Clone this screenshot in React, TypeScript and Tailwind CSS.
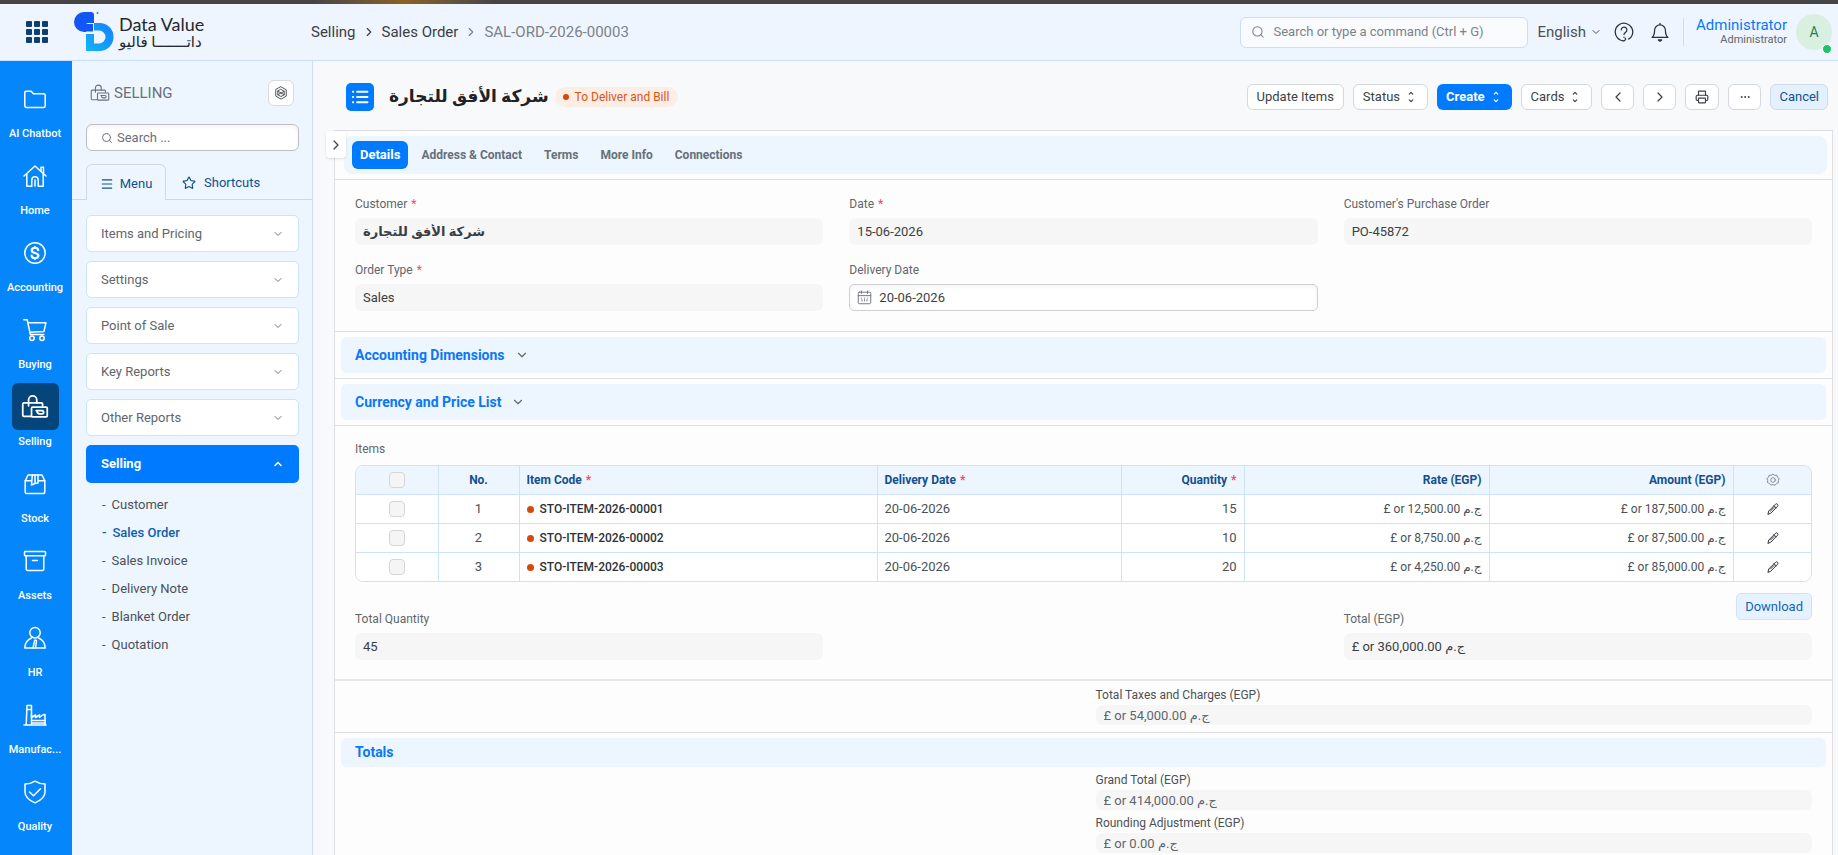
import React, { useId, useState } from 'react';
import {
    ChevronDown, ChevronLeft, ChevronRight, ChevronUp,
    Ellipsis, Menu, Printer, Search, Star,
} from 'lucide-react';

/* ---------- ICONS ---------- */

function Icon({ children, className = 'size-6', stroke = 1.5 }: { children: React.ReactNode; className?: string; stroke?: number }) {
    return (
        <svg
            viewBox="0 0 24 24"
            fill="none"
            stroke="currentColor"
            strokeWidth={stroke}
            strokeLinecap="round"
            strokeLinejoin="round"
            className={className}
            aria-hidden="true"
        >
            {children}
        </svg>
    );
}

const sellingShape = (
    <>
        <path d="M9 20H2.5a1 1 0 0 1-1-1V9.5a1 1 0 0 1 1-1h15a1 1 0 0 1 1 1V11" />
        <path d="M6.5 11V6a3.5 3.5 0 0 1 7 0v2.5" />
        <rect x="9" y="12" width="13.5" height="8.5" rx="1" />
        <path d="M13 15h5a1.4 1.4 0 0 1 0 2.8h-1.6a2.4 2.4 0 0 1-2.6-1.8" />
    </>
);

const folderShape = <path d="M1.8 19V5.6a1.4 1.4 0 0 1 1.4-1.4h5l2.2 2.6h10.4a1.4 1.4 0 0 1 1.4 1.4V19a1.4 1.4 0 0 1-1.4 1.4H3.2A1.4 1.4 0 0 1 1.8 19Z" />;

const homeShape = (
    <>
        <path d="M1 12 12 2l11 10" />
        <path d="M18 7.2V3.2h2.5v6.3" />
        <path d="M3.8 10v12.2h5V16a3.2 3.2 0 0 1 6.4 0v6.2h5V10" />
        <path d="M12 16v6" />
    </>
);

const accountingShape = (
    <>
        <circle cx="12" cy="12" r="10.2" />
        <path strokeWidth="2.2" d="M15.2 9.2c-.2-1.5-1.5-2.3-3.2-2.3-1.9 0-3.3.9-3.3 2.5 0 3.4 6.7 1.8 6.7 5.2 0 1.6-1.5 2.6-3.4 2.6-1.9 0-3.2-1-3.4-2.6M12 6v.5M12 17.5v.5" />
    </>
);

const buyingShape = (
    <>
        <path d="M.8 1.8h3.4l3.2 14.7h13.4" />
        <path d="M4.9 4.8h18l-1.9 8.6L7 14.3" />
        <circle cx="9" cy="20.3" r="2.2" />
        <circle cx="19" cy="20.3" r="2.2" />
    </>
);

const stockShape = (
    <>
        <path d="M2.2 8.8 5 3h14l2.8 5.8V20a1.6 1.6 0 0 1-1.6 1.6H3.8A1.6 1.6 0 0 1 2.2 20Z" />
        <path d="M2.2 8.8h6M15.5 8.8h6.3M9.3 3 8.5 13l3.5-1.5V3M15 3v8l-3 .5" />
    </>
);

const assetsShape = (
    <>
        <rect x="1.5" y="2.5" width="21" height="4.2" rx=".8" />
        <path d="M3.2 6.7V20a1.5 1.5 0 0 0 1.5 1.5h14.6a1.5 1.5 0 0 0 1.5-1.5V6.7M9.5 11.5h5" />
    </>
);

const hrShape = (
    <>
        <circle cx="12" cy="6.7" r="5.2" />
        <path d="M8.5 12C4.5 13.5 2 17 1.8 22H10M15.5 12c4 1.5 6.5 5 6.7 10H12.5" />
        <path d="M11.5 15 10 22h2.5l1-7M11.5 15c0-1.5 2-1.5 2 0" />
    </>
);

const factoryShape = (
    <>
        <path d="M1 22h22M3.2 22 4 2.5h4.5V22M4 6.5h4.5" />
        <path d="M8.5 11.5v3l4-2.5v2.5l4-2.5v2.5l3-2.5 2.5-.5V22" />
        <path d="M8.5 17.5H22M9 20h13" />
    </>
);

const qualityShape = (
    <>
        <path d="M12 1.2c3 2 6.5 2.8 10 2.9v8c0 5-4.5 8.5-10 10.8C6.5 20.6 2 17.1 2 12.1v-8c3.5-.1 7-.9 10-2.9Z" />
        <path d="m6.5 12 4 3.7 7-7" />
    </>
);

function Logo() {
    return (
        <svg viewBox="0 0 40 40" className="size-10" aria-hidden="true">
            <defs>
                <linearGradient id="logo-lower" x1="0" y1="1" x2="1" y2="0">
                    <stop offset="0" stopColor="#12b5fb" />
                    <stop offset="1" stopColor="#1580fa" />
                </linearGradient>
            </defs>
            <path d="M10 0h7a3 3 0 0 1 3 3v8h-6a2 2 0 0 0-2 2v7h-2A10 10 0 0 1 10 0Z" fill="#1257f5" />
            <path d="M20 11h5.5a14 14 0 0 1 0 28H12V22h8v9.5h5a6.5 6.5 0 0 0 0-13h-5Z" fill="url(#logo-lower)" />
            <path d="M12 12h7v7.500h-7Z" fill="#1257f5" />
            <circle cx="23.5" cy="1" r="1" fill="#1580fa" />
        </svg>
    );
}

function HexGear({ className }: { className: string }) {
    return (
        <Icon className={className}>
            <path d="M12 1.5 21 6.5v11l-9 5-9-5v-11Z" />
            <path d="m12 6 5.5 3v6L12 18l-5.5-3V9ZM6.5 9l11 6M17.5 9l-11 6" />
        </Icon>
    );
}

function UpDown() {
    return (
        <Icon className="size-[14px]" stroke={2}>
            <path d="m9 7 3-3 3 3M9 17l3 3 3-3" />
        </Icon>
    );
}

/* ---------- DATA ---------- */

const modules = [
    { label: 'AI Chatbot', shape: folderShape },
    { label: 'Home', shape: homeShape },
    { label: 'Accounting', shape: accountingShape },
    { label: 'Buying', shape: buyingShape },
    { label: 'Selling', shape: sellingShape },
    { label: 'Stock', shape: stockShape },
    { label: 'Assets', shape: assetsShape },
    { label: 'HR', shape: hrShape },
    { label: 'Manufac...', shape: factoryShape },
    { label: 'Quality', shape: qualityShape },
];

const menuGroups = ['Items and Pricing', 'Settings', 'Point of Sale', 'Key Reports', 'Other Reports'];
const sellingLinks = ['Customer', 'Sales Order', 'Sales Invoice', 'Delivery Note', 'Blanket Order', 'Quotation'];
const formTabs = ['Details', 'Address & Contact', 'Terms', 'More Info', 'Connections'];

const items = [
    { code: 'STO-ITEM-2026-00001', date: '20-06-2026', qty: 15, rate: '12,500.00', amount: '187,500.00' },
    { code: 'STO-ITEM-2026-00002', date: '20-06-2026', qty: 10, rate: '8,750.00', amount: '87,500.00' },
    { code: 'STO-ITEM-2026-00003', date: '20-06-2026', qty: 20, rate: '4,250.00', amount: '85,000.00' },
];

const customer = 'شركة الأفق للتجارة';
const egp = (value: string) => `£ or ${value} ج.م`;

/* ---------- SMALL PARTS ---------- */

function Required() {
    return <span className="ml-1 text-[#f8485e]">*</span>;
}

interface FieldProps {
    label: string;
    value: string;
    required?: boolean;
    bold?: boolean;
    compact?: boolean;
}

function Field({ label, value, required, bold, compact }: FieldProps) {
    const id = useId();
    return (
        <div className="flex flex-col">
            <label htmlFor={id} className={compact ? 'text-[12px] leading-5 text-[#4b5158]' : 'mb-1 text-[12px] leading-5 text-[#5f666d]'}>
                {label}
                {required && <Required />}
            </label>
            <input
                id={id}
                readOnly
                defaultValue={value}
                className={`w-full rounded-md bg-[#f6f6f6] px-2 text-[13px] outline-none ${compact ? 'mb-[3px] h-5 text-[#5f666d]' : 'h-[27px] text-[#3a3f45]'} ${bold ? 'font-bold text-[#1f2226]' : ''}`}
            />
        </div>
    );
}

function ToolButton({ children, label }: { children: React.ReactNode; label?: string }) {
    return (
        <button
            type="button"
            aria-label={label}
            className="flex h-[26px] min-w-[33px] items-center justify-center gap-1 rounded-md border border-[#d5d8dc] bg-white px-[9px] text-[13px] text-[#3a3f45]"
        >
            {children}
        </button>
    );
}

function FoldedSection({ title }: { title: string }) {
    return (
        <section className="border-b border-[#dcdee1] px-[6px] py-[5px]">
            <button type="button" className="flex h-9 w-full items-center gap-[10px] rounded-md bg-[#edf5ff] px-[14px] text-[14px] font-bold text-[#0a78f5]">
                {title}
                <ChevronDown className="size-[14px] text-[#5f666d]" strokeWidth={2} />
            </button>
        </section>
    );
}

/* ---------- PAGE PARTS ---------- */

function Header() {
    return (
        <header className="flex h-[57px] shrink-0 items-center border-b border-[#c5dffd] bg-[#eef5ff]">
            <div className="flex w-[311px] shrink-0 items-center">
                <button type="button" aria-label="Apps" className="ml-[26px] grid grid-cols-3 gap-[2px]">
                    {Array.from({ length: 9 }, (_, i) => (
                        <span key={i} className="size-[6px] rounded-[1px] bg-[#0d3f73]" />
                    ))}
                </button>
                <div className="ml-[26px] flex items-center gap-[5px]">
                    <Logo />
                    <div className="flex flex-col text-[#24282d]">
                        <span className="font-['Lato',sans-serif] text-[18px] leading-5">Data Value</span>
                        <span className="text-[15px] leading-4">داتـــــــا فاليو</span>
                    </div>
                </div>
            </div>

            <nav aria-label="Breadcrumb" className="flex items-center gap-[6px] text-[15px] text-[#3a3f45]">
                <a href="#selling">Selling</a>
                <ChevronRight className="size-[14px]" />
                <a href="#sales-order">Sales Order</a>
                <ChevronRight className="size-[14px] text-[#7c8289]" />
                <span className="text-[#7c8289]">SAL-ORD-2026-00003</span>
            </nav>

            <div className="ml-auto flex items-center pr-[6px]">
                <label className="flex h-[31px] w-[288px] items-center gap-2 rounded-md border border-[#c5dffd] bg-[#f9fbfe] px-[10px] text-[#7c8289]">
                    <Search className="size-[14px] shrink-0" strokeWidth={1.8} />
                    <input
                        type="search"
                        aria-label="Search or type a command"
                        placeholder="Search or type a command (Ctrl + G)"
                        className="w-full bg-transparent text-[13px] outline-none placeholder:text-[#7c8289]"
                    />
                </label>
                <button type="button" className="ml-[9px] flex items-center gap-1 text-[15px] text-[#4b5158]">
                    English
                    <ChevronDown className="size-3" />
                </button>
                <button type="button" aria-label="Help" className="ml-3 text-[#2d3238]">
                    <Icon className="size-5">
                        <path d="M12 22.5a10.500 10.500 0 1 1 9.800-6.800c-.8 2.300-2.300 3.800-4.300 4.800" />
                        <path d="M8.7 9.5a3.400 3.400 0 1 1 5.300 2.800c-1.300.9-2 1.400-2 2.700M12 18v.3M12 22.500c2-1 2.500-2 1.500-3" />
                    </Icon>
                </button>
                <button type="button" aria-label="Notifications" className="ml-4 text-[#2d3238]">
                    <Icon className="size-5">
                        <path d="M2.5 18.5h19c-2.500-2-3-4-3-8.500a6.500 6.500 0 0 0-13 0c0 4.500-.5 6.500-3 8.500ZM12 3.500V1.500" />
                        <path d="M10 21.5h4l-2 1.5Z" fill="currentColor" />
                    </Icon>
                </button>
                <div className="ml-[13px] h-7 w-px bg-[#d8dde3]" />
                <div className="ml-3 flex flex-col items-end">
                    <span className="text-[15px] leading-4 text-[#0a78f5]">Administrator</span>
                    <span className="text-[11px] leading-[14px] text-[#5f666d]">Administrator</span>
                </div>
                <div className="relative ml-[9px] flex size-9 items-center justify-center rounded-full bg-[#d9f0e1] text-[14px] text-[#2f7a55]">
                    A
                    <span className="absolute right-0 -bottom-1 size-[10px] rounded-full border border-white bg-[#1fc16b]" />
                </div>
            </div>
        </header>
    );
}

function ModuleRail() {
    return (
        <nav aria-label="Modules" className="flex w-[72px] shrink-0 flex-col gap-[10px] overflow-hidden bg-[#0686fb] pt-[14px] pr-[2px]">
            {modules.map((m) => (
                <a key={m.label} href="#module" className="flex flex-col items-center gap-1 text-white">
                    <span className={`flex size-[47px] items-center justify-center rounded-md ${m.label === 'Selling' ? 'bg-[#06457c]' : ''}`}>
                        <Icon className={m.label === 'Selling' ? 'size-7' : 'size-6'}>{m.shape}</Icon>
                    </span>
                    <span className="text-[11px] leading-4 font-medium">{m.label}</span>
                </a>
            ))}
        </nav>
    );
}

function Sidebar() {
    return (
        <aside className="flex w-[241px] shrink-0 flex-col border-r border-[#c5dffd] bg-[#edf5ff]">
            <div className="mt-[19px] flex items-center justify-between px-[18px]">
                <h2 className="flex items-center gap-1 text-[15px] text-[#6b7178]">
                    <Icon className="size-5" stroke={1.3}>{sellingShape}</Icon>
                    SELLING
                </h2>
                <button type="button" aria-label="Menu settings" className="flex size-[26px] items-center justify-center rounded-md border border-[#d9dbde] bg-white text-[#3a3f45]">
                    <HexGear className="size-[14px]" />
                </button>
            </div>

            <label className="mr-[13px] ml-[14px] mt-[18px] flex h-[27px] items-center gap-1 rounded-md border border-[#bcbfc3] bg-white px-[14px] text-[#6b7178] shadow-inner">
                <Search className="size-3 shrink-0" />
                <input type="search" aria-label="Search menu" placeholder="Search ..." className="w-full bg-transparent text-[13px] outline-none placeholder:text-[#6b7178]" />
            </label>

            <div className="mt-[13px] flex h-9 text-[13px] text-[#12508f]">
                <div className="w-[14px] border-b border-[#d3d8de]" />
                <button type="button" className="flex w-20 items-center justify-center gap-[6px] rounded-t-md border border-b-0 border-[#d3d8de] pt-[2px]">
                    <Menu className="size-[14px]" />
                    Menu
                </button>
                <button type="button" className="flex flex-1 items-center gap-2 border-b border-[#d3d8de] pt-[2px] pl-4">
                    <Star className="size-[14px]" />
                    Shortcuts
                </button>
            </div>

            <div className="mt-[15px] mr-[13px] ml-[14px] flex flex-col gap-[9px]">
                {menuGroups.map((g) => (
                    <button key={g} type="button" className="flex h-[37px] items-center justify-between rounded-[5px] border border-[#cde3fd] bg-white px-[14px] text-[13px] text-[#5f666d]">
                        {g}
                        <ChevronDown className="size-3" strokeWidth={1.8} />
                    </button>
                ))}
                <button type="button" aria-expanded="true" className="flex h-[38px] items-center justify-between rounded-[5px] bg-[#007bff] px-[15px] text-[13px] font-bold text-white">
                    Selling
                    <ChevronUp className="size-3" strokeWidth={3} />
                </button>
            </div>
            <ul className="mt-2 ml-[30px] text-[13px] leading-7 text-[#4b5158]">
                {sellingLinks.map((l) => (
                    <li key={l} className={l === 'Sales Order' ? 'font-medium text-[#0f5fb0]' : ''}>
                        <a href="#link" className="flex gap-[6px]">
                            <span>-</span>
                            {l}
                        </a>
                    </li>
                ))}
            </ul>
        </aside>
    );
}

function ItemsTable() {
    const th = 'border-r border-[#cde3fd] px-[7px] font-bold';
    const td = 'border-t border-r border-[#cde3fd] px-[7px]';
    const box = 'block mx-auto size-4 appearance-none rounded-[4px] border border-[#d3d5d8] bg-[#f5f5f5] checked:bg-[#007bff]';
    return (
        <div className="overflow-hidden rounded-lg border border-[#cde3fd]">
            <table className="w-full table-fixed text-[12px] text-[#4b5158]">
                <colgroup>
                    <col className="w-[82px]" />
                    <col className="w-[81px]" />
                    <col className="w-[358px]" />
                    <col className="w-[244px]" />
                    <col className="w-[123px]" />
                    <col className="w-[245px]" />
                    <col className="w-[244px]" />
                    <col className="w-[80px]" />
                </colgroup>
                <thead>
                    <tr className="h-7 bg-[#edf5ff] text-[#12508f]">
                        <th className={th}><input type="checkbox" aria-label="Select all rows" className={box} /></th>
                        <th className={`${th} text-center`}>No.</th>
                        <th className={`${th} text-left`}>Item Code<Required /></th>
                        <th className={`${th} text-left`}>Delivery Date<Required /></th>
                        <th className={`${th} text-right`}>Quantity<Required /></th>
                        <th className={`${th} text-right`}>Rate (EGP)</th>
                        <th className={`${th} text-right`}>Amount (EGP)</th>
                        <th>
                            <button type="button" aria-label="Configure columns" className="mx-auto block text-[#7c8289]">
                                <Icon className="size-[14px]">
                                    <path d="m12 2 3 2 3.700-.2.900 3.500 2.900 2.200-1.400 3.400.400 3.600-3.400 1.400-2.300 2.900L12 20l-3.800.8-2.300-2.900-3.400-1.400.4-3.600L1.500 9.500l2.900-2.200.9-3.500 3.700.2Z" />
                                    <circle cx="12" cy="12" r="4" />
                                </Icon>
                            </button>
                        </th>
                    </tr>
                </thead>
                <tbody>
                    {items.map((item, i) => (
                        <tr key={item.code} className="h-[29px] bg-white">
                            <td className={td}><input type="checkbox" aria-label={`Select row ${i + 1}`} className={box} /></td>
                            <td className={`${td} text-center text-[13px]`}>{i + 1}</td>
                            <td className={`${td} font-medium text-[#2d3238]`}>
                                <span className="mr-[6px] inline-block size-[7px] rounded-full bg-[#d44a08] align-middle" />
                                {item.code}
                            </td>
                            <td className={`${td} text-[13px]`}>{item.date}</td>
                            <td className={`${td} text-right text-[13px]`}>{item.qty}</td>
                            <td className={`${td} text-right`}>{egp(item.rate)}</td>
                            <td className={`${td} text-right`}>{egp(item.amount)}</td>
                            <td className="border-t border-[#cde3fd]">
                                <button type="button" aria-label={`Edit row ${i + 1}`} className="mx-auto block text-[#2d3238]">
                                    <Icon className="size-3" stroke={2}>
                                        <path d="m2 22 1.500-6L17 2.500a2.500 2.500 0 0 1 4 4L8 20ZM14 5.500l4.500 4.500M7 16l7-7" />
                                    </Icon>
                                </button>
                            </td>
                        </tr>
                    ))}
                </tbody>
            </table>
        </div>
    );
}

function OrderForm() {
    const [tab, setTab] = useState('Details');
    const dateId = useId();
    return (
        <div className="relative mr-[5px] ml-[21px] border border-[#dcdee1] bg-[#fdfdfd]">
            <button type="button" aria-label="Expand sidebar" className="absolute top-0 -left-[9px] flex h-[27px] w-5 items-center justify-center rounded bg-white text-[#3a3f45] shadow-sm">
                <ChevronRight className="size-4" strokeWidth={1.8} />
            </button>

            <div className="border-b border-[#dcdee1] py-[5px] pr-[5px] pl-[9px]">
                <div role="tablist" className="flex h-[38px] items-center gap-[22px] rounded-lg bg-[#edf5ff] px-2 text-[12px] font-bold">
                    {formTabs.map((t) => (
                        <button
                            key={t}
                            type="button"
                            role="tab"
                            aria-selected={t === tab}
                            onClick={() => setTab(t)}
                            className={t === tab ? '-mr-[9px] h-7 rounded-md bg-[#007bff] px-2 text-[13px] text-white' : 'h-7 text-[#65707a]'}
                        >
                            {t}
                        </button>
                    ))}
                </div>
            </div>

            <section className="grid grid-cols-3 gap-x-[26px] gap-y-[15px] border-b border-[#dcdee1] px-5 pt-[14px] pb-5">
                <Field label="Customer" value={customer} required bold />
                <Field label="Date" value="15-06-2026" required />
                <Field label="Customer's Purchase Order" value="PO-45872" />
                <Field label="Order Type" value="Sales" required />
                <div className="flex flex-col">
                    <label htmlFor={dateId} className="mb-1 text-[12px] leading-5 text-[#5f666d]">Delivery Date</label>
                    <div className="flex h-[27px] items-center gap-[7px] rounded-[5px] border border-[#cdcfd2] bg-white px-[7px] shadow-inner">
                        <Icon className="size-[15px] shrink-0 text-[#6b7178]">
                            <rect x="2" y="3.5" width="20" height="18.5" rx="2" />
                            <path d="M2 9h20M7 1.500v4M17 1.500v4M7 13v.1M12 13v.1M17 13v.1M8 17.500v-2M12 17.500v-2M16 17.500v-2" />
                        </Icon>
                        <input id={dateId} defaultValue="20-06-2026" className="w-full bg-transparent text-[13px] text-[#3a3f45] outline-none" />
                    </div>
                </div>
            </section>

            <FoldedSection title="Accounting Dimensions" />
            <FoldedSection title="Currency and Price List" />

            <section className="border-b-2 border-[#e6e7e9] px-5 pt-[13px] pb-[19px]">
                <h3 className="mb-[6px] text-[12px] leading-5 text-[#5f666d]">Items</h3>
                <ItemsTable />
                <div className="mt-[11px] grid grid-cols-3 items-start gap-x-[26px]">
                    <div className="pt-4">
                        <Field label="Total Quantity" value="45" />
                    </div>
                    <div className="relative col-start-3 pt-4">
                        <Field label="Total (EGP)" value={egp('360,000.00')} />
                        <button type="button" className="absolute top-0 right-0 h-[27px] rounded-[5px] border border-[#cde3fd] bg-[#e6f2ff] px-2 text-[13px] text-[#1565b3]">
                            Download
                        </button>
                    </div>
                </div>
            </section>

            <section className="grid grid-cols-2 gap-x-6 border-b border-[#dcdee1] px-5 py-1">
                <div className="col-start-2">
                    <Field compact label="Total Taxes and Charges (EGP)" value={egp('54,000.00')} />
                </div>
            </section>

            <section>
                <h3 className="mx-[6px] mt-[5px] mb-[3px] flex h-[29px] items-center rounded-md bg-[#edf5ff] px-[14px] text-[14px] font-bold text-[#0a78f5]">Totals</h3>
                <div className="grid grid-cols-2 gap-x-6 px-5 pb-4">
                    <div className="col-start-2">
                        <Field compact label="Grand Total (EGP)" value={egp('414,000.00')} />
                        <Field compact label="Rounding Adjustment (EGP)" value={egp('0.00')} />
                    </div>
                </div>
            </section>
        </div>
    );
}

export default function App() {
    return (
        <div className="flex h-screen flex-col overflow-hidden bg-[#f8f9fb] font-['Roboto','DejaVu_Sans',sans-serif]">
            <div className="h-1 shrink-0 bg-linear-to-r from-[#454545] from-17% via-[#8a6224] via-22% to-[#454545] to-27%" />
            <Header />
            <div className="flex min-h-0 flex-1">
                <ModuleRail />
                <Sidebar />
                <main className="min-w-0 flex-1 overflow-y-auto [scrollbar-width:none]">
                    <div className="flex h-[69px] items-center pt-[3px] pr-[10px] pl-[33px]">
                        <span className="flex size-7 items-center justify-center rounded-[5px] bg-[#007bff] text-white">
                            <Icon className="size-[18px]" stroke={2.5}>
                                <path d="M8 5h14M8 12h14M8 19h14M2.5 5h.5M2.5 12h.5M2.5 19h.5" />
                            </Icon>
                        </span>
                        <h1 className="ml-[15px] text-[17px] font-bold text-[#1f2226]">{customer}</h1>
                        <span className="ml-[6px] flex h-5 items-center gap-[6px] rounded-full bg-[#fdeee5] pr-[9px] pl-2 text-[12px] text-[#d9541a]">
                            <span className="size-[6px] rounded-full bg-[#d44a08]" />
                            To Deliver and Bill
                        </span>
                        <div className="ml-auto flex gap-[9px]">
                            <ToolButton>Update Items</ToolButton>
                            <ToolButton>Status <UpDown /></ToolButton>
                            <button type="button" className="flex h-[26px] items-center gap-1 rounded-md bg-[#007bff] px-[9px] text-[13px] font-bold text-white">
                                Create <UpDown />
                            </button>
                            <ToolButton>Cards <UpDown /></ToolButton>
                            <ToolButton label="Previous"><ChevronLeft className="-mx-1 size-4" strokeWidth={1.8} /></ToolButton>
                            <ToolButton label="Next"><ChevronRight className="-mx-1 size-4" strokeWidth={1.8} /></ToolButton>
                            <ToolButton label="Print"><Printer className="size-[14px]" /></ToolButton>
                            <ToolButton label="More"><Ellipsis className="size-3" /></ToolButton>
                            <button type="button" className="h-[26px] rounded-md border border-[#d0dbe8] bg-[#e3f0fe] px-2 text-[13px] text-[#12508f]">Cancel</button>
                        </div>
                    </div>
                    <OrderForm />
                </main>
            </div>
        </div>
    );
}
